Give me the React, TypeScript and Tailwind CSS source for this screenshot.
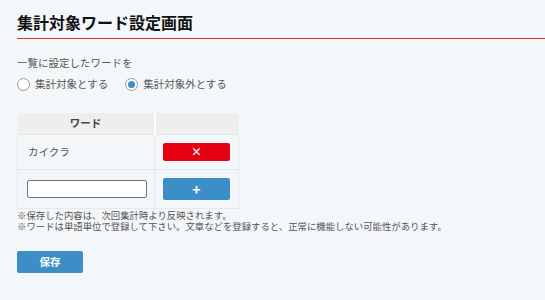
import React from "react";

export default function App() {
  const font = { fontFamily: '"Noto Sans CJK JP", "Noto Sans", sans-serif' };
  return (
    <div className="min-h-[300px] w-full bg-[#f4f7f9] pt-[10px] pl-[17px] text-[#444]" style={font}>
      <h1 className="border-b border-[#c9302c] pb-[4px] text-[16px] font-bold leading-[24px] text-[#111]">
        集計対象ワード設定画面
      </h1>
      <p className="mt-[16px] text-[10.5px] leading-[16px] text-[#555]">一覧に設定したワードを</p>
      <div className="mt-[5px] flex items-center text-[10.5px] leading-[16px] text-[#555]">
        <label className="flex items-center">
          <span className="h-[13px] w-[13px] rounded-full border border-[#9a9a9a] bg-white" />
          <span className="ml-[5px]">集計対象とする</span>
        </label>
        <label className="ml-[17px] flex items-center">
          <span className="flex h-[13px] w-[13px] items-center justify-center rounded-full border border-[#9a9a9a] bg-white">
            <span className="h-[7px] w-[7px] rounded-full bg-[#3b8fc6]" />
          </span>
          <span className="ml-[5px]">集計対象外とする</span>
        </label>
      </div>
      <table className="mt-[21px] w-[222px] border-collapse text-[10.5px]">
        <thead>
          <tr className="h-[21px] bg-[#eeeeee]">
            <th className="w-[137px] border-r-2 border-white p-0 text-center font-bold text-[#444]">ワード</th>
            <th className="p-0" />
          </tr>
        </thead>
        <tbody>
          <tr className="h-[35px]">
            <td className="border border-[#e6e8ea] pl-[10px] text-[#555]">カイクラ</td>
            <td className="border border-[#e6e8ea] px-[8px]">
              <button className="flex h-[18px] w-[67px] items-center justify-center rounded-[2px] bg-[#e50012] text-[11px] font-bold leading-none text-white">
                ×
              </button>
            </td>
          </tr>
          <tr className="h-[39px]">
            <td className="border border-[#e6e8ea] pl-[9px]">
              <input type="text" className="block h-[18px] w-[120px] rounded-[2px] border border-[#767676] bg-white" />
            </td>
            <td className="border border-[#e6e8ea] px-[8px]">
              <button className="flex h-[22px] w-[67px] items-center justify-center rounded-[2px] bg-[#3b8fc6] text-[14px] font-bold leading-none text-white">
                +
              </button>
            </td>
          </tr>
        </tbody>
      </table>
      <div className="mt-[1px] text-[9.4px] leading-[11px] text-[#555]">
        <p>※保存した内容は、次回集計時より反映されます。</p>
        <p>※ワードは単語単位で登録して下さい。文章などを登録すると、正常に機能しない可能性があります。</p>
      </div>
      <button className="mt-[19px] flex h-[22px] w-[66px] items-center justify-center rounded-[2px] bg-[#3b8fc6] text-[10.5px] font-bold text-white">
        保存
      </button>
    </div>
  );
}
